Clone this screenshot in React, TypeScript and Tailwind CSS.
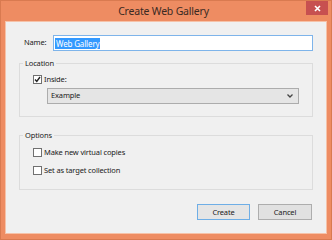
import React from "react";

const font = { fontFamily: '"Noto Sans", "Open Sans", sans-serif' };

function Checkbox({ checked }: { checked?: boolean }) {
  return (
    <span className="flex h-[9px] w-[9px] shrink-0 items-center justify-center border border-[#707070] bg-white">
      {checked && (
        <svg width="7" height="7" viewBox="0 0 7 7">
          <path d="M1 3.5 L2.8 5.5 L6 1" fill="none" stroke="#222" strokeWidth="1.4" />
        </svg>
      )}
    </span>
  );
}

function Group({ title, className, children }: { title: string; className: string; children: React.ReactNode }) {
  return (
    <fieldset className={`border border-[#dcdcdc] ${className}`}>
      <legend className="ml-[3px] px-[2px] text-[7.5px] leading-[10px] text-[#1a1a1a]">{title}</legend>
      {children}
    </fieldset>
  );
}

export default function App() {
  return (
    <div
      className="flex h-[240px] w-[332px] flex-col bg-[#ee8c62] border border-[#d97a50] text-[#1a1a1a] tracking-[-0.15px]"
      style={font}
    >
      {/* Title bar */}
      <div className="flex h-[20px] items-start">
        <div className="flex-1 pl-[20px] pt-[4px] text-center text-[10.5px] leading-[13px] tracking-[-0.2px] text-[#3a2a22]">
          Create Web Gallery
        </div>
        <div className="mr-[3px] flex h-[14px] w-[22px] items-center justify-center bg-[#c75050]">
          <svg width="7" height="7" viewBox="0 0 7 7">
            <path d="M1 1 L6 6 M6 1 L1 6" stroke="#fff" strokeWidth="1.6" />
          </svg>
        </div>
      </div>

      {/* Client area */}
      <div className="mx-[4px] mb-[5px] flex flex-1 flex-col border border-[#f6c2a8] bg-[#f0f0f0] px-[13px]">
        {/* Name row */}
        <div className="mt-[13px] flex h-[16px] items-center">
          <span className="ml-[5px] w-[29px] text-[7.5px]">Name:</span>
          <div className="flex h-[16px] flex-1 items-center border border-[#7eb4ea] bg-white pl-[1px]">
            <span className="bg-[#3399ff] px-[1px] text-[8px] leading-[11px] text-white">Web Gallery</span>
          </div>
        </div>

        <Group title="Location" className="mt-[7px]">
          <div className="px-[13px] pb-[12px] pt-[7px]">
            <label className="flex h-[9px] items-center gap-[2px] text-[7.5px]">
              <Checkbox checked />
              <span>Inside:</span>
            </label>
            <div className="ml-[14px] mt-[4px] flex h-[16px] items-center justify-between border border-[#acacac] bg-[#e5e5e5] pl-[3px] pr-[5px] text-[7.5px]">
              <span>Example</span>
              <svg width="6" height="4" viewBox="0 0 6 4">
                <path d="M0.5 0.5 L3 3 L5.5 0.5" fill="none" stroke="#444" strokeWidth="1.3" />
              </svg>
            </div>
          </div>
        </Group>

        <Group title="Options" className="mt-[13px]">
          <div className="px-[13px] pb-[14px] pt-[8px]">
            <label className="flex h-[9px] items-center gap-[2px] text-[7.5px]">
              <Checkbox />
              <span>Make new virtual copies</span>
            </label>
            <label className="mt-[9px] flex h-[9px] items-center gap-[2px] text-[7.5px]">
              <Checkbox />
              <span>Set as target collection</span>
            </label>
          </div>
        </Group>

        {/* Buttons */}
        <div className="mt-[14px] flex justify-end gap-[8px] pr-[1px]">
          <button className="h-[16px] w-[53px] border border-[#6eaee6] bg-[#e5e5e5] text-[7.5px] leading-[14px]">
            Create
          </button>
          <button className="h-[16px] w-[54px] border border-[#adadad] bg-[#e1e1e1] text-[7.5px] leading-[14px]">
            Cancel
          </button>
        </div>
      </div>
    </div>
  );
}
